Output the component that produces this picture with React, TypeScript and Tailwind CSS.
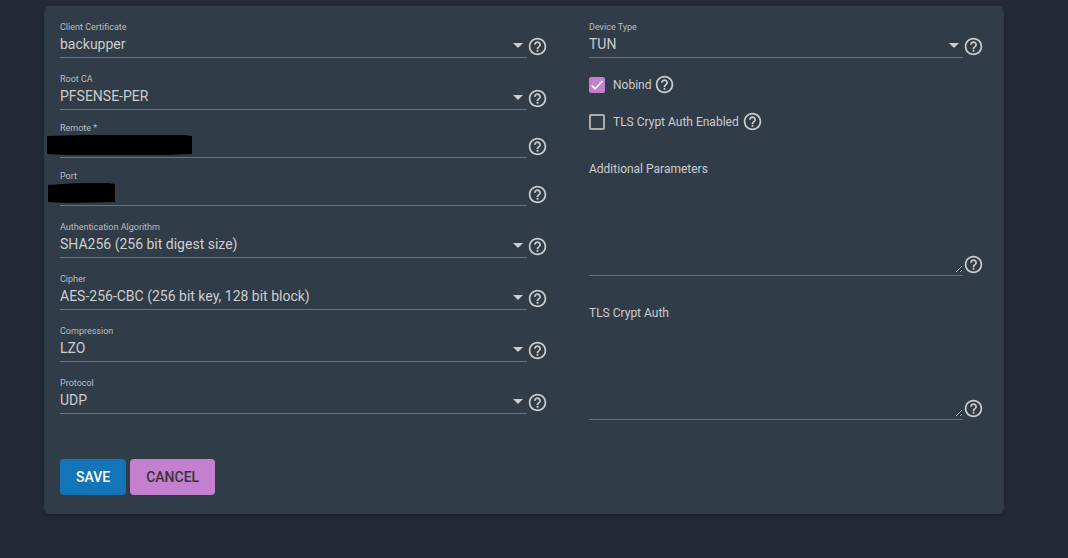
import { useId, type ReactNode } from 'react';

const leftFields = [
  { kind: 'select', label: 'Client Certificate', value: 'backupper' },
  { kind: 'select', label: 'Root CA', value: 'PFSENSE-PER' },
  { kind: 'text', label: 'Remote *', mask: 'remote' },
  { kind: 'text', label: 'Port', mask: 'port' },
  {
    kind: 'select',
    label: 'Authentication Algorithm',
    value: 'SHA256 (256 bit digest size)',
  },
  {
    kind: 'select',
    label: 'Cipher',
    value: 'AES-256-CBC (256 bit key, 128 bit block)',
  },
  { kind: 'select', label: 'Compression', value: 'LZO' },
  { kind: 'select', label: 'Protocol', value: 'UDP' },
];

function HelpButton({ label }: { label: string }) {
  return (
    <button type="button" aria-label={`Help: ${label}`} className="shrink-0">
      <svg viewBox="0 0 24 24" className="size-[21px] fill-[#cbcbcb]">
        <path d="M11 18h2v-2h-2v2zm1-16C6.48 2 2 6.48 2 12s4.48 10 10 10 10-4.48 10-10S17.52 2 12 2zm0 18c-4.41 0-8-3.59-8-8s3.59-8 8-8 8 3.59 8 8-3.59 8-8 8zm0-14c-2.21 0-4 1.79-4 4h2c0-1.1.9-2 2-2s2 .9 2 2c0 2-3 1.75-3 5h2c0-2.25 3-2.5 3-5 0-2.21-1.79-4-4-4z" />
      </svg>
    </button>
  );
}

function FieldRow({ label, children }: { label: string; children: ReactNode }) {
  return (
    <div className="flex items-end">
      <div className="min-w-0 flex-1 border-b border-[#69737b]">{children}</div>
      <div className="flex pb-px">
        <HelpButton label={label} />
      </div>
    </div>
  );
}

function SelectField({ label, value }: { label: string; value: string }) {
  const id = useId();
  return (
    <div className="pt-[15px]">
      <FieldRow label={label}>
        <label htmlFor={id} className="block pb-px text-[9px] leading-3 text-[#b9bdc1]">
          {label}
        </label>
        <div className="relative pb-[3px]">
          <select
            id={id}
            className="block h-5 w-full appearance-none bg-transparent text-sm leading-5 text-[#cdcdcd] outline-none"
          >
            <option>{value}</option>
          </select>
          <svg
            viewBox="0 0 10 5"
            className="pointer-events-none absolute top-[9px] right-1 h-[5px] w-[10px] fill-[#cdcbcd]"
          >
            <path d="M0 0h10L5 5z" />
          </svg>
        </div>
      </FieldRow>
    </div>
  );
}

function TextField({ label, mask }: { label: string; mask?: string }) {
  const id = useId();
  return (
    <div className="pt-3">
      <FieldRow label={label}>
        <label htmlFor={id} className="block text-[9px] leading-3 text-[#b9bdc1]">
          {label}
        </label>
        <div className="relative pb-[3px]">
          <input
            id={id}
            type="text"
            className="block h-5 w-full bg-transparent text-sm leading-5 text-[#cdcdcd] outline-none"
          />
          {mask === 'remote' && (
            <svg
              viewBox="0 0 146 20"
              className="absolute top-px -left-[13px] h-5 w-[146px]"
            >
              <path d="M0 1L40 0H138L145 1V19L120 20H20L0 19z" />
            </svg>
          )}
          {mask === 'port' && (
            <svg
              viewBox="0 0 67 20"
              className="absolute top-px -left-3 h-5 w-[67px]"
            >
              <path d="M0 2L30 0H60L67 1V19L20 20L0 19z" />
            </svg>
          )}
        </div>
      </FieldRow>
    </div>
  );
}

function CheckField({ label, checked }: { label: string; checked?: boolean }) {
  return (
    <div className="flex h-[37px] items-center gap-[3px]">
      <label className="flex items-center gap-2 text-xs text-[#cdcdcd]">
        <span className="relative block size-4">
          <input
            type="checkbox"
            defaultChecked={checked}
            className="peer block size-4 appearance-none rounded-xs border-2 border-[#acacac] checked:border-[#c280cf] checked:bg-[#c280cf]"
          />
          <svg
            viewBox="0 0 24 24"
            className="pointer-events-none absolute inset-0 hidden size-4 fill-none stroke-white stroke-[2.5] peer-checked:block"
          >
            <path d="M4.1 12.7L9 17.6 20.3 6.3" />
          </svg>
        </span>
        {label}
      </label>
      <HelpButton label={label} />
    </div>
  );
}

function AreaField({ label }: { label: string }) {
  const id = useId();
  return (
    <FieldRow label={label}>
      <label htmlFor={id} className="block text-xs leading-[18px] text-[#cdcdcd]">
        {label}
      </label>
      <textarea
        id={id}
        className="mb-[2px] block h-[95px] w-full resize-y bg-transparent text-sm text-[#cdcdcd] outline-none"
      />
    </FieldRow>
  );
}

export default function App() {
  return (
    <main className="min-h-screen bg-[#232935] pt-[6px] pr-16 pb-11 pl-11 font-[Roboto,sans-serif]">
      <form className="rounded-md bg-[#303c48] px-4 pb-[19px] shadow-md">
        <div className="grid grid-cols-[488fr_395fr] gap-x-[41px] pr-1">
          <div>
            {leftFields.map((field) =>
              field.kind === 'select' ? (
                <SelectField
                  key={field.label}
                  label={field.label}
                  value={field.value ?? ''}
                />
              ) : (
                <TextField
                  key={field.label}
                  label={field.label}
                  mask={field.mask}
                />
              )
            )}
          </div>
          <div>
            <SelectField label="Device Type" value="TUN" />
            <div className="mt-2 mb-5">
              <CheckField label="Nobind" checked />
              <CheckField label="TLS Crypt Auth Enabled" />
            </div>
            <div className="flex flex-col gap-7">
              <AreaField label="Additional Parameters" />
              <AreaField label="TLS Crypt Auth" />
            </div>
          </div>
        </div>
        <div className="mt-[39px] flex gap-1">
          <button
            type="button"
            className="h-9 rounded bg-[#1374b8] px-4 text-sm font-medium text-white"
          >
            SAVE
          </button>
          <button
            type="button"
            className="h-9 rounded bg-[#c280cf] px-4 text-sm font-medium text-[#3a3338]"
          >
            CANCEL
          </button>
        </div>
      </form>
    </main>
  );
}
